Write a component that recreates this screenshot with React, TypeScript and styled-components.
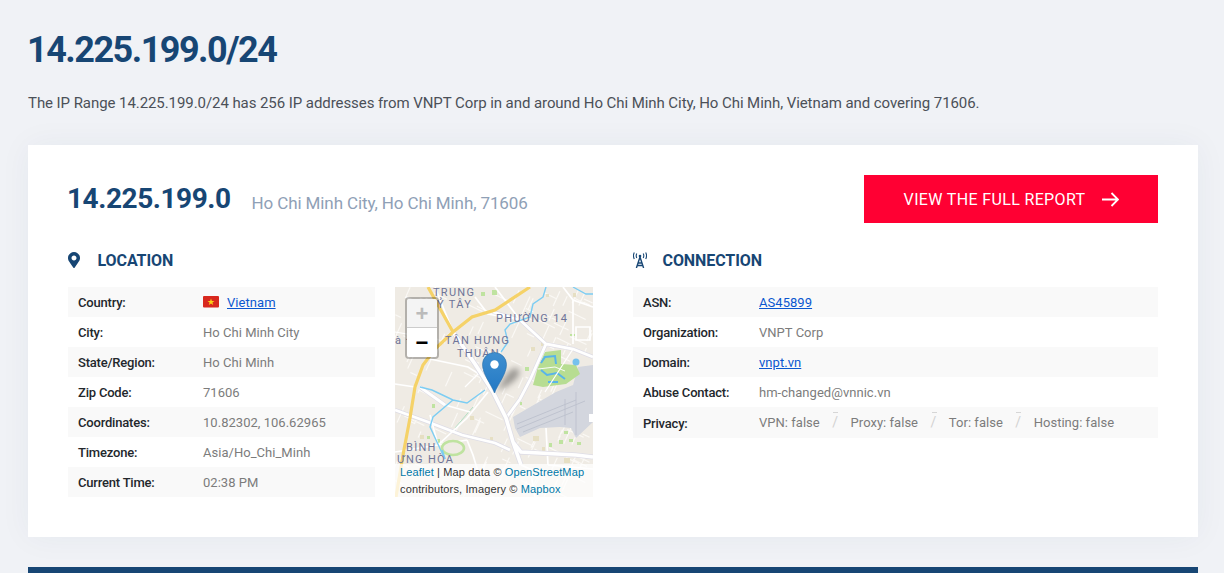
import React from "react";
import styled, { createGlobalStyle } from "styled-components";
import { FaMapMarkerAlt } from "react-icons/fa";

const Global = createGlobalStyle`
  html, body { margin: 0; padding: 0; background: #f0f2f6; overflow: hidden; }
  body { font-family: Roboto, "Noto Sans", sans-serif; }
`;
const Page = styled.div`
  width: 1224px; height: 573px; overflow: hidden; padding: 0 26px 0 28px; box-sizing: border-box;
`;
const Title = styled.h1`
  margin: 0 0 0 -1px; padding-top: 27px; font-size: 36px; line-height: 46px; font-weight: 700; color: #174674; letter-spacing: -1.5px;
`;
const Intro = styled.p`
  margin: 19px 0 0; font-size: 15px; line-height: 22px; color: #4b5058; letter-spacing: -0.07px;
`;
const Card = styled.section`
  margin-top: 31px; background: #fff; height: 392px; padding: 30px 40px 0; box-sizing: border-box;
  box-shadow: 0 0 30px rgba(40, 60, 90, 0.05);
`;
const CardHead = styled.header`
  display: flex; align-items: center; justify-content: space-between; height: 48px;
`;
const HeadLeft = styled.div`
  display: flex; align-items: center; gap: 21px; margin-left: -1px;
`;
const Ip = styled.h2`
  margin: 0; font-size: 28px; line-height: 48px; font-weight: 700; color: #174674; letter-spacing: -0.45px;
`;
const Place = styled.span`
  font-size: 17px; color: #8fa0b6; letter-spacing: -0.11px; margin-top: 8px;
`;
const ReportButton = styled.a`
  width: 294px; height: 48px; background: #ff0033; color: #fff; display: flex; align-items: center; justify-content: center;
  gap: 17px; font-size: 16px; letter-spacing: 0.35px; font-weight: 400; padding-left: 1px; box-sizing: border-box;
`;
const Columns = styled.div`
  display: grid; grid-template-columns: 525px 525px; column-gap: 40px; margin-top: 24px;
`;
const SectionTitle = styled.h3`
  margin: 0 0 14px; display: flex; align-items: center; height: 26px; color: #174674; font-size: 16px; font-weight: 700; letter-spacing: -0.08px;
`;
const IconSlot = styled.span`
  width: 29.500px; display: flex; align-items: center; font-size: 16px; color: #174674;
  svg { margin-left: -2px; }
`;
const TowerSlot = styled(IconSlot)`
  svg { margin-left: 0; }
`;
const LocationBody = styled.div`
  display: grid; grid-template-columns: 307px 198px; column-gap: 20px;
`;
const Rows = styled.div`
  display: flex; flex-direction: column;
`;
const Row = styled.div<{ $tall?: boolean; $labelWidth: number }>`
  display: grid; grid-template-columns: ${p => p.$labelWidth}px 1fr; align-items: center;
  height: ${p => (p.$tall ? 31 : 30)}px; padding-left: 10px; font-size: 13px;
  &:nth-child(odd) { background: #f9f9f9; }
`;
const Label = styled.span<{ $low?: boolean }>`
  color: #23272c; font-weight: 500; letter-spacing: -0.2px;
  ${p => (p.$low ? "margin-top: 2px;" : "")}
`;
const Value = styled.span`
  color: #7c7c7c; letter-spacing: 0.03px; display: flex; align-items: center;
`;
const Link = styled.a`
  color: #0b57d0; text-decoration: underline; letter-spacing: 0.05px;
`;
const Flag = styled.svg`
  width: 16px; height: 12px; margin-right: 8px;
`;
const Slash = styled.span`
  color: #d2d2d2; margin: 0 12.500px; font-size: 14px; position: relative; top: -1px;
  &::before { content: ""; position: absolute; left: 1px; top: -2px; width: 5px; border-top: 1px solid #d6d6d6; }
`;
const MapFrame = styled.div`
  position: relative; width: 198px; height: 210px; overflow: hidden; background: #efebe4;
`;
const MapArt = styled.svg`
  display: block; width: 198px; height: 210px;
`;
const Zoom = styled.div`
  position: absolute; left: 10px; top: 10px; width: 30px; border: 2px solid rgba(0,0,0,.25); border-radius: 4px; background-clip: padding-box;
  font-family: "Liberation Sans", sans-serif;
`;
const ZoomBtn = styled.div<{ $off?: boolean }>`
  width: 30px; height: 29px; box-sizing: border-box; display: flex; align-items: center; justify-content: center;
  font-size: 22px; font-weight: 700; line-height: 29px;
  background: ${p => (p.$off ? "#f4f4f4" : "#fff")}; color: ${p => (p.$off ? "#bbb" : "#000")};
  border-radius: ${p => (p.$off ? "2px 2px 0 0" : "0 0 2px 2px")};
  ${p => (p.$off ? "border-bottom: 1px solid #ccc;" : "")}
`;
const Attribution = styled.div`
  position: absolute; left: 0; right: 0; bottom: 0; height: 33px; padding: 0 5px; box-sizing: border-box;
  background: rgba(255,255,255,.74); font-family: "Liberation Sans", sans-serif; font-size: 11px; line-height: 17px; color: #333;
  letter-spacing: 0.13px; white-space: nowrap;
  a { color: #0078a8; }
`;
const Pin = styled.svg`
  position: absolute; left: 87px; top: 65px; width: 50px; height: 42px; overflow: visible;
`;
const FooterBar = styled.div`
  margin-top: 30px; height: 10px; background: #174674;
`;
const Arrow = () => (
  <svg width="17" height="15" viewBox="0 0 17 15" fill="none" stroke="#fff" strokeWidth="1.8">
    <path d="M0 7.5h15.5M9.5 1l6.5 6.5L9.5 14" />
  </svg>
);
const Tower = () => (
  <svg width="14" height="16" viewBox="0 0 14 16" fill="none" stroke="#174674" strokeWidth="1.4">
    <circle cx="7" cy="4" r="1.3" fill="#174674" stroke="none" />
    <path d="M7 5L3.400 16M7 5L10.600 16M5.100 11H8.900M4.300 13.500L9.700 13.500" />
    <path d="M3.800 1.500Q2.600 3.700 3.800 6M1.300 .5Q-.4 3.700 1.300 7M10.200 1.500Q11.400 3.700 10.200 6M12.700 .5Q14.400 3.700 12.700 7" strokeWidth="1.1" />
  </svg>
);

const fineStreets = (() => {
  let s = 7;
  const r = () => { s = (s * 16807) % 2147483647; return s / 2147483647; };
  const out: string[] = [];
  for (let i = 0; i < 190; i++) {
    const x = r() * 198, y = r() * 210, a = r() < 0.5 ? 0.45 : 2.0, l = 6 + r() * 14;
    out.push(`M${x.toFixed(1)} ${y.toFixed(1)}l${(Math.cos(a) * l).toFixed(1)} ${(Math.sin(a) * l).toFixed(1)}`);
  }
  return out.join("");
})();

const MapPicture = () => (
  <MapArt viewBox="0 0 198 210">
    <defs>
      <linearGradient id="pinBlue" x1="0" y1="0" x2="0" y2="1">
        <stop offset="0" stopColor="#3f8fd0" /><stop offset="1" stopColor="#2379c4" />
      </linearGradient>
      <filter id="soft" x="-50%" y="-50%" width="200%" height="200%"><feGaussianBlur stdDeviation="3" /></filter>
      <filter id="raster"><feGaussianBlur stdDeviation="0.35" /></filter>
    </defs>
    <rect width="198" height="210" fill="#efebe4" />
    <g filter="url(#raster)">
      <path d={fineStreets} stroke="#fbf9f6" strokeWidth="1.100" fill="none" />
      <g fill="#e6dfc3">
        <rect x="136" y="60" width="4" height="4" /><rect x="146" y="55" width="4" height="4" /><rect x="151" y="7" width="3" height="3" /><rect x="178" y="6" width="3" height="4" />
        <rect x="75" y="129" width="4" height="4" /><rect x="25" y="148" width="4" height="4" /><rect x="138" y="149" width="6" height="5" /><rect x="147" y="160" width="3" height="4" /><rect x="169" y="171" width="6" height="5" /><rect x="95" y="150" width="3" height="3" />
      </g>
      <g fill="#bfe3a0">
        <rect x="97" y="3" width="5" height="5" /><rect x="86" y="5" width="4" height="4" /><rect x="175" y="47" width="5" height="2" /><rect x="130" y="80" width="4" height="4" />
        <rect x="125" y="115" width="2" height="3" /><rect x="169" y="144" width="4" height="3" /><rect x="154" y="156" width="3" height="4" /><rect x="164" y="153" width="4" height="4" /><rect x="174" y="152" width="4" height="3" /><rect x="182" y="155" width="4" height="3" />
        <rect x="32" y="149" width="3" height="3" /><rect x="42" y="152" width="3" height="4" /><rect x="37" y="117" width="3" height="4" />
      </g>
      <path d="M60 141L78 120" stroke="#a9dcc0" strokeWidth="0.9" />
      <path d="M118 130L161 105L178 98L183 80L198 78V135L181 151L176 141L165 140L145 141L125 150L120 141Z" fill="#d3d6de" />
      <g stroke="#bcc1cd" strokeWidth="0.9" fill="none">
        <path d="M122 137L181 113M122 142L190 114M128 145L178 125M181 105V148M170 112V138" />
      </g>
      <rect x="194" y="127" width="4" height="8" fill="#fff" />
      <path d="M150 65L166 63L166 77L181 78L185 87L171 97L148 100L138 98L143 80Z" fill="#b7dd92" />
      <path d="M146 76L150 70L160 69L161 77M146 83L152 88L162 86L170 92M153 95H163" stroke="#58b4ea" strokeWidth="2" fill="none" />
      <path d="M143 82L160 80L170 84" stroke="#fff" strokeWidth="0.9" fill="none" />
      <circle cx="181" cy="75" r="3.500" fill="#75c1ee" />
      <g stroke="#dedde6" fill="none" strokeWidth="4.200">
        <path d="M98 25L125 33L151 57L178 62L198 70M151 57L135 93L125 112L111 131M0 123L33 135L67 148L100 156L115 163M25 100L50 118" />
      </g>
      <g stroke="#fff" fill="none" strokeWidth="2.800">
        <path d="M98 25L125 33L151 57L178 62L198 70M151 57L135 93L125 112L111 131M0 123L33 135L67 148L100 156L115 163M25 100L50 118" />
      </g>
      <g stroke="#fff" fill="none" strokeWidth="1.700">
        <path d="M40 0L58 45M80 10L93 27L125 33M35 72L73 80L100 97M0 97L20 100M43 158L72 131L93 105M35 128L43 158M50 118L75 125M72 153L78 168L87 198" />
        <path d="M168 0L178 13L198 20M178 13V57M181 40H195V53H181ZM151 141L153 178M100 0L125 33M43 158L72 153M0 165L43 158M153 178L198 182M126 178L135 182L140 210" />
        <path d="M150 105L178 62M90 60L100 97M0 45L30 50M10 10L34 20M70 100L110 60" strokeWidth="1.200" />
      </g>
      <path d="M58 45L80 77L98 105L111 131L118 155L126 165L181 168L198 170M118 155L126 178" stroke="#dedde6" strokeWidth="5.200" fill="none" />
      <path d="M58 45L80 77L98 105L111 131L118 155L126 165L181 168L198 170M118 155L126 178" stroke="#fff" strokeWidth="3.600" fill="none" />
      <path d="M135 0L100 23L77 30L58 45L40 62L28 78L20 100L15 131L8 168L3 198L1 210M33 0L58 45" stroke="#f5d268" strokeWidth="3.200" fill="none" />
      <path d="M151 0L148 10L138 17L135 30L115 37L110 43L113 55L106 65M178 0L191 7H198M25 100L37 103L58 113L72 116L90 103M58 113L38 130L35 140L48 168" stroke="#7ccdf3" strokeWidth="1.400" fill="none" />
      <ellipse cx="58" cy="161" rx="11" ry="7" stroke="#bfe3a0" strokeWidth="2.600" fill="#efebe4" />
      <path d="M47 163L50 172" stroke="#7ccdf3" strokeWidth="1.800" />
    </g>
    <g fontFamily="Roboto, sans-serif" fontSize="11" fill="#6e7498" letterSpacing="1.300">
      <text x="38" y="9">TRUNG</text><text x="42" y="21">Ỷ TÂY</text>
      <text x="101" y="35">PHƯỜNG 14</text>
      <text x="50" y="57">TÂN HƯNG</text><text x="62" y="70">THUẬN</text>
      <text x="0" y="57">à Đ</text>
      <text x="11" y="164">BÌNH</text><text x="2" y="176">ƯNG HÒA</text>
    </g>
  </MapArt>
);

const location: [string, React.ReactNode][] = [
  ["Country:", <><Flag viewBox="0 0 16 12"><rect width="16" height="11.500" rx="1" fill="#d8281e" /><path d="M8 2.400l.9 2.500h2.600L9.400 6.500l.8 2.600L8 7.500 5.800 9.100l.8-2.600-2.100-1.600h2.600z" fill="#fcd116" /></Flag><Link>Vietnam</Link></>],
  ["City:", "Ho Chi Minh City"],
  ["State/Region:", "Ho Chi Minh"],
  ["Zip Code:", "71606"],
  ["Coordinates:", "10.82302, 106.62965"],
  ["Timezone:", "Asia/Ho_Chi_Minh"],
  ["Current Time:", "02:38 PM"],
];

export default function App() {
  return (
    <Page>
      <Global />
      <Title>14.225.199.0/24</Title>
      <Intro>The IP Range 14.225.199.0/24 has 256 IP addresses from VNPT Corp in and around Ho Chi Minh City, Ho Chi Minh, Vietnam and covering 71606.</Intro>
      <Card>
        <CardHead>
          <HeadLeft>
            <Ip>14.225.199.0</Ip>
            <Place>Ho Chi Minh City, Ho Chi Minh, 71606</Place>
          </HeadLeft>
          <ReportButton>VIEW THE FULL REPORT <Arrow /></ReportButton>
        </CardHead>
        <Columns>
          <div>
            <SectionTitle><IconSlot><FaMapMarkerAlt /></IconSlot>LOCATION</SectionTitle>
            <LocationBody>
              <Rows>
                {location.map(([k, v]) => (
                  <Row key={k} $labelWidth={125}><Label>{k}</Label><Value>{v}</Value></Row>
                ))}
              </Rows>
              <MapFrame>
                <MapPicture />
                <Zoom>
                  <ZoomBtn $off>+</ZoomBtn>
                  <ZoomBtn>−</ZoomBtn>
                </Zoom>
                <Pin viewBox="0 0 50 42">
                  <path d="M14 39C21 30 25 18 33 16C42 17 38 30 14 39Z" fill="rgba(0,0,0,.36)" filter="url(#soft)" />
                  <path d="M12.500 41C9 32 .5 22 .5 12.500a12 12 0 0 1 24 0C24.500 22 16 32 12.500 41Z" fill="url(#pinBlue)" stroke="#2a6fa8" strokeWidth=".6" />
                  <circle cx="12.500" cy="12.500" r="4.200" fill="#fff" />
                </Pin>
                <Attribution>
                  <a>Leaflet</a> | Map data © <a>OpenStreetMap</a><br />contributors, Imagery © <a>Mapbox</a>
                </Attribution>
              </MapFrame>
            </LocationBody>
          </div>
          <div>
            <SectionTitle><TowerSlot><Tower /></TowerSlot>CONNECTION</SectionTitle>
            <Rows>
              <Row $labelWidth={116}><Label>ASN:</Label><Value><Link>AS45899</Link></Value></Row>
              <Row $labelWidth={116}><Label>Organization:</Label><Value>VNPT Corp</Value></Row>
              <Row $labelWidth={116}><Label>Domain:</Label><Value><Link>vnpt.vn</Link></Value></Row>
              <Row $labelWidth={116}><Label>Abuse Contact:</Label><Value>hm-changed@vnnic.vn</Value></Row>
              <Row $labelWidth={116} $tall><Label $low>Privacy:</Label><Value>VPN: false<Slash>/</Slash>Proxy: false<Slash>/</Slash>Tor: false<Slash>/</Slash>Hosting: false</Value></Row>
            </Rows>
          </div>
        </Columns>
      </Card>
      <FooterBar />
    </Page>
  );
}
